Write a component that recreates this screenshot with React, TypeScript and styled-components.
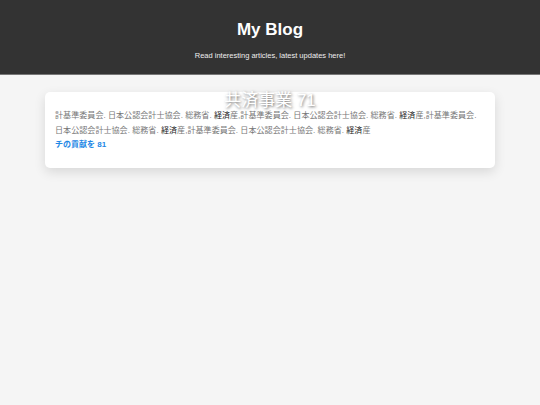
import styled, { createGlobalStyle } from 'styled-components'

const GlobalStyle = createGlobalStyle`
  html, body {
    margin: 0;
    padding: 0;
    background-color: #f5f5f5;
    font-family: "Liberation Sans", Arial, "Noto Sans CJK JP", sans-serif;
  }
`

const Header = styled.header`
  height: 75px;
  background-color: #333333;
  border-bottom: 1px solid #777;
  color: #ffffff;
  text-align: center;
  padding-top: 20px;
  box-sizing: border-box;
`

const BlogTitle = styled.h1`
  margin: 0;
  font-size: 17px;
  line-height: 19px;
  font-weight: bold;
`

const Tagline = styled.p`
  margin: 12px 0 0;
  font-size: 7.5px;
  line-height: 9px;
  color: #eeeeee;
`

const Main = styled.main`
  padding: 17px 45px;
`

const Card = styled.article`
  background-color: #ffffff;
  border-radius: 5px;
  box-shadow: 0 4px 12px rgba(0, 0, 0, 0.12);
  height: 76px;
  box-sizing: border-box;
  padding: 0 10px;
`

const CardTitle = styled.h2`
  margin: 0;
  height: 15px;
  padding-top: 1px;
  font-size: 17px;
  line-height: 16px;
  font-weight: normal;
  text-align: center;
  color: #ffffff;
  text-shadow: 1px 1px 3px rgba(0, 0, 0, 0.6);
  position: relative;
`

const Excerpt = styled.p`
  margin: 0;
  max-width: 426px;
  font-size: 8.08px;
  line-height: 15px;
  color: #777777;
`

const Keyword = styled.span`
  color: #222222;
`

const MoreLink = styled.a`
  display: block;
  font-size: 8px;
  line-height: 14px;
  font-weight: bold;
  color: #1e88e5;
  text-decoration: none;
`

const segment = (tail: string) => (
  <>
    計基準委員会. 日本公認会計士協会. 総務省. <Keyword>経済</Keyword>産{tail}
  </>
)

export default function App() {
  return (
    <>
      <GlobalStyle />
      <Header>
        <BlogTitle>My Blog</BlogTitle>
        <Tagline>Read interesting articles, latest updates here!</Tagline>
      </Header>
      <Main>
        <Card>
          <CardTitle>共済事業 71</CardTitle>
          <Excerpt>
            {segment(',')}
            {segment(',')}
            {segment(',')}
            {segment('')}
          </Excerpt>
          <MoreLink href="#">チの貢献を 81</MoreLink>
        </Card>
      </Main>
    </>
  )
}
